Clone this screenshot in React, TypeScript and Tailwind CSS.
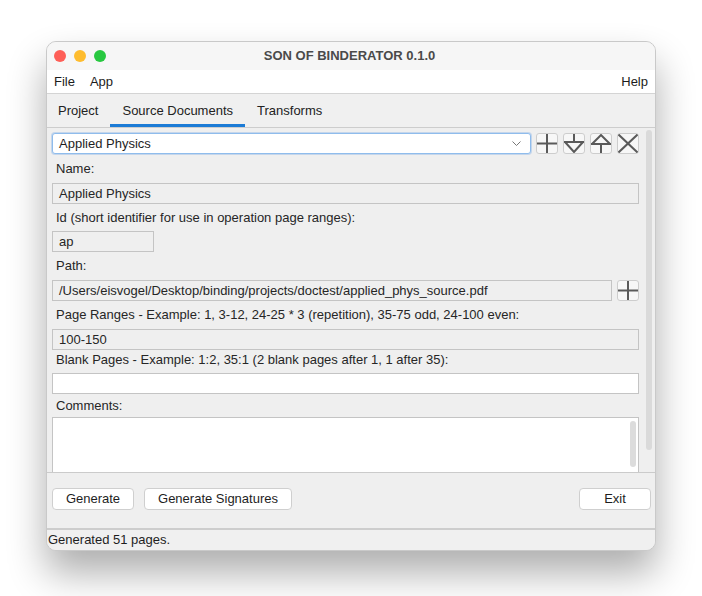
import React from "react";

function IconButton({ kind }: { kind: "plus" | "down" | "up" | "close" }) {
  return (
    <button className="w-[22px] h-[21px] rounded-[3px] border border-[#cdcdcd] bg-[#f7f7f7] flex items-center justify-center p-0 shrink-0">
      <svg width="20" height="19" viewBox="0 0 20 19" fill="none" stroke="#5a5a5a" strokeWidth="2">
        {kind === "plus" && (
          <>
            <path d="M10 0 V19" />
            <path d="M0 9.5 H20" />
          </>
        )}
        {kind === "down" && (
          <>
            <path d="M10 0 V8" />
            <path d="M0 8 H20" />
            <path d="M1 8 L10 18 L19 8" />
          </>
        )}
        {kind === "up" && (
          <>
            <path d="M1 10 L10 1 L19 10" />
            <path d="M0 10 H20" />
            <path d="M10 10 V19" />
          </>
        )}
        {kind === "close" && (
          <>
            <path d="M0.5 0.5 L19.5 18.5" />
            <path d="M19.5 0.5 L0.5 18.5" />
          </>
        )}
      </svg>
    </button>
  );
}

function Label({ children, className }: { children: React.ReactNode; className?: string }) {
  return <div className={`pl-[4px] text-[#262626] flex items-center whitespace-nowrap ${className ?? ""}`}>{children}</div>;
}

function Field({ value, white, className }: { value?: string; white?: boolean; className?: string }) {
  return (
    <div
      className={`h-[21px] border border-[#c4c4c4] px-[6px] leading-[19px] text-[#262626] whitespace-nowrap overflow-hidden ${
        white ? "bg-white" : "bg-[#efefef]"
      } ${className ?? ""}`}
    >
      {value}
    </div>
  );
}

export default function App() {
  return (
    <div
      className="min-h-screen bg-white pl-[46px] pt-[41px] text-[13px]"
      style={{ fontFamily: '"Liberation Sans", Arial, sans-serif' }}
    >
      <div className="w-[610px] h-[510px] rounded-[10px] border border-[#c9c9c9] bg-[#efefef] shadow-[0_22px_38px_rgba(0,0,0,0.32)] flex flex-col overflow-hidden">
        {/* title bar */}
        <div className="h-[28px] bg-[#f6f6f6] flex items-center relative shrink-0">
          <div className="flex gap-[8px] pl-[7px]">
            <span className="w-[12px] h-[12px] rounded-full bg-[#fe5f57]" />
            <span className="w-[12px] h-[12px] rounded-full bg-[#febc2e]" />
            <span className="w-[12px] h-[12px] rounded-full bg-[#28c840]" />
          </div>
          <div className="absolute inset-0 flex items-center justify-center font-bold text-[#4a4a4a] pr-[3px]">
            SON OF BINDERATOR 0.1.0
          </div>
        </div>

        {/* menu bar */}
        <div className="h-[24px] bg-white border-b border-[#d4d4d4] flex items-center px-[7px] text-[#1c1c1c] shrink-0">
          <span>File</span>
          <span className="ml-[15px]">App</span>
          <span className="ml-auto">Help</span>
        </div>

        {/* tabs */}
        <div className="h-[34px] bg-[#f0f0f0] border-b border-[#cdcdcd] flex items-end shrink-0 whitespace-nowrap">
          <div className="h-[34px] pl-[11px] pr-[12px] flex items-center pt-[5px] border-b-[3px] border-transparent text-[#222]">Project</div>
          <div className="h-[34px] px-[12px] flex items-center pt-[5px] text-[#222] border-b-[3px] border-[#1c7bd6]">
            Source Documents
          </div>
          <div className="h-[34px] px-[12px] flex items-center pt-[5px] border-b-[3px] border-transparent text-[#222]">Transforms</div>
        </div>

        {/* scroll panel */}
        <div className="h-[345px] border-b border-[#cbcbcb] flex shrink-0 overflow-hidden">
          <div className="flex-1 pl-[5px] pr-[7px] pt-[5px] overflow-hidden">
            <div className="flex items-center gap-[5px]">
              <div className="w-[481px] h-[21px] rounded-[3px] border border-[#8fbcec] bg-white flex items-center px-[6px] text-[#1e1e1e] shadow-[0_0_0_1px_rgba(120,170,230,0.35)]">
                <span>Applied Physics</span>
                <svg className="ml-auto mr-[3px]" width="9" height="6" viewBox="0 0 9 6" fill="none" stroke="#777" strokeWidth="1">
                  <path d="M0.5 0.5 L4.5 4.5 L8.5 0.5" />
                </svg>
              </div>
              <IconButton kind="plus" />
              <IconButton kind="down" />
              <IconButton kind="up" />
              <IconButton kind="close" />
            </div>
            <Label className="h-[29px]">Name:</Label>
            <Field value="Applied Physics" />
            <Label className="h-[27px]">Id (short identifier for use in operation page ranges):</Label>
            <Field value="ap" className="w-[102px]" />
            <Label className="h-[28px]">Path:</Label>
            <div className="flex gap-[5px]">
              <Field value="/Users/eisvogel/Desktop/binding/projects/doctest/applied_phys_source.pdf" className="flex-1" />
              <IconButton kind="plus" />
            </div>
            <Label className="h-[28px]">
              Page Ranges - Example: 1, 3-12, 24-25 * 3 (repetition), 35-75 odd, 24-100 even:
            </Label>
            <Field value="100-150" />
            <Label className="h-[23px] items-start pt-[0px]">
              Blank Pages - Example: 1:2, 35:1 (2 blank pages after 1, 1 after 35):
            </Label>
            <Field white />
            <Label className="h-[23px]">Comments:</Label>
            <div className="h-[70px] border border-[#c4c4c4] bg-white flex justify-end pr-[2px] pt-[3px]">
              <div className="w-[6px] h-[46px] rounded-full bg-[#dcdcdc]" />
            </div>
          </div>
          <div className="w-[9px] pt-[2px] flex justify-start">
            <div className="w-[6px] h-[320px] rounded-full bg-[#dadada]" />
          </div>
        </div>

        {/* buttons */}
        <div className="h-[55px] flex items-center pl-[5px] pr-[4px] pb-[3px] gap-[10px] shrink-0">
          <button className="w-[82px] h-[22px] rounded-[4px] border border-[#cfcfcf] bg-white text-[#1e1e1e]">Generate</button>
          <button className="w-[148px] h-[22px] rounded-[4px] border border-[#cfcfcf] bg-white text-[#1e1e1e]">
            Generate Signatures
          </button>
          <button className="ml-auto w-[72px] h-[22px] rounded-[4px] border border-[#cfcfcf] bg-white text-[#1e1e1e]">Exit</button>
        </div>

        {/* status bar */}
        <div className="flex-1 border-t-2 border-[#cdcdcd] bg-[#f0f0f0] flex items-center px-[1px] pb-[3px] text-[#1e1e1e]">
          Generated 51 pages.
        </div>
      </div>
    </div>
  );
}
